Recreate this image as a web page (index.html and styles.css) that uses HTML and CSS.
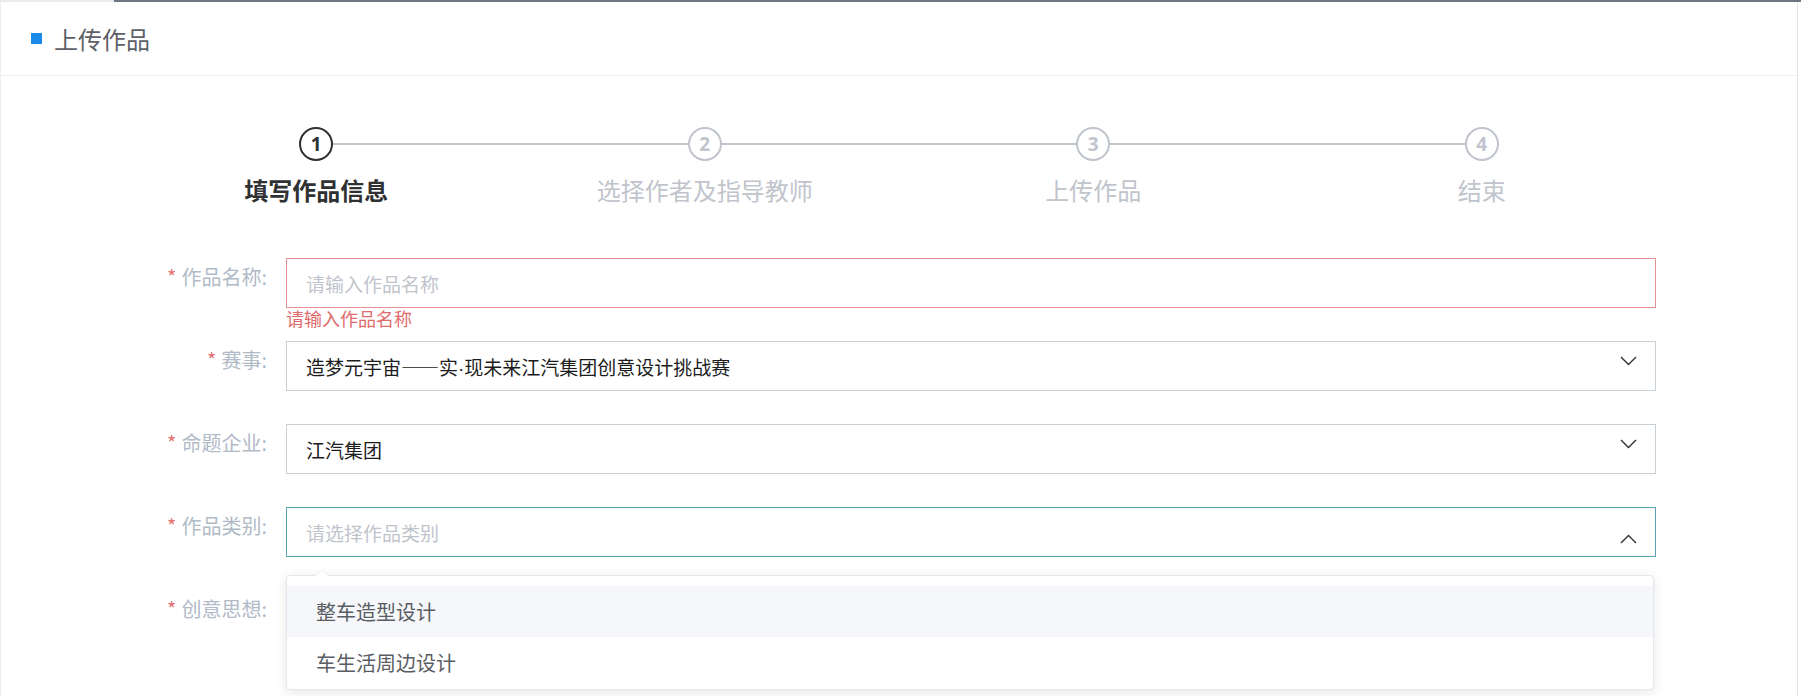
FILE: index.html
```html
<!DOCTYPE html>
<html lang="zh-CN">
<head>
<meta charset="utf-8">
<title>上传作品</title>
<link rel="stylesheet" href="styles.css">
</head>
<body>
<div class="topline"><span class="topline-left"></span><span class="topline-right"></span></div>
<div class="card">
  <div class="card-header">
    <span class="mark"></span>
    <span class="card-title">上传作品</span>
  </div>
  <div class="steps">
    <div class="step active">
      <div class="step-head"><span class="step-line"></span><span class="step-icon">1</span></div>
      <div class="step-title">填写作品信息</div>
    </div>
    <div class="step">
      <div class="step-head"><span class="step-line"></span><span class="step-icon">2</span></div>
      <div class="step-title">选择作者及指导教师</div>
    </div>
    <div class="step">
      <div class="step-head"><span class="step-line"></span><span class="step-icon">3</span></div>
      <div class="step-title">上传作品</div>
    </div>
    <div class="step last">
      <div class="step-head"><span class="step-icon">4</span></div>
      <div class="step-title">结束</div>
    </div>
  </div>
  <form class="form">
    <div class="form-item">
      <label class="form-label"><span class="req">*</span>作品名称:</label>
      <div class="form-content">
        <div class="input error"><span class="placeholder">请输入作品名称</span></div>
        <div class="error-msg">请输入作品名称</div>
      </div>
    </div>
    <div class="form-item">
      <label class="form-label"><span class="req">*</span>赛事:</label>
      <div class="form-content">
        <div class="input select"><span class="value">造梦元宇宙——实<span class="dot">·</span>现未来江汽集团创意设计挑战赛</span>
          <svg class="arrow" width="17" height="10" viewBox="0 0 17 10"><path d="M1 1 L8.5 8.5 L16 1" fill="none" stroke="#303133" stroke-width="1.4"/></svg>
        </div>
      </div>
    </div>
    <div class="form-item">
      <label class="form-label"><span class="req">*</span>命题企业:</label>
      <div class="form-content">
        <div class="input select"><span class="value">江汽集团</span>
          <svg class="arrow" width="17" height="10" viewBox="0 0 17 10"><path d="M1 1 L8.5 8.5 L16 1" fill="none" stroke="#303133" stroke-width="1.4"/></svg>
        </div>
      </div>
    </div>
    <div class="form-item">
      <label class="form-label"><span class="req">*</span>作品类别:</label>
      <div class="form-content">
        <div class="input select focus"><span class="placeholder">请选择作品类别</span>
          <svg class="arrow up" width="17" height="10" viewBox="0 0 17 10"><path d="M1 9 L8.5 1.5 L16 9" fill="none" stroke="#303133" stroke-width="1.4"/></svg>
        </div>
        <div class="dropdown">
          <span class="dropdown-arrow"></span>
          <ul class="options">
            <li class="option hover">整车造型设计</li>
            <li class="option">车生活周边设计</li>
          </ul>
        </div>
      </div>
    </div>
    <div class="form-item">
      <label class="form-label"><span class="req">*</span>创意思想:</label>
      <div class="form-content"></div>
    </div>
  </form>
</div>
</body>
</html>
```
FILE: styles.css
```css
html, body {
  margin: 0;
  padding: 0;
  overflow: hidden;
  background: #ffffff;
}
body {
  font-family: "Noto Sans CJK SC", "Noto Sans", "Liberation Sans", sans-serif;
  color: #303133;
}
.topline {
  display: flex;
  height: 2px;
}
.topline-left {
  width: 114px;
  background: #e9ebee;
}
.topline-right {
  flex: 1;
  background: #6e7682;
}
.card {
  width: 1796px;
  border-left: 1px solid #eeeeee;
  border-right: 1px solid #e6e6e6;
  height: 720px;
}
.card-header {
  height: 73px;
  border-bottom: 1px solid #f0f0f0;
  display: flex;
  align-items: center;
  padding-left: 30px;
}
.mark {
  width: 11px;
  height: 11px;
  background: #1a8be8;
  margin-right: 12px;
}
.card-title {
  font-size: 24px;
  color: #5e6168;
  line-height: 1;
}
.steps {
  display: flex;
  margin: 51px 121px 0 121px;
}
.step {
  flex: 1;
  display: flex;
  flex-direction: column;
  align-items: center;
}
.step-head {
  position: relative;
  width: 100%;
  height: 34px;
  display: flex;
  justify-content: center;
}
.step-line {
  position: absolute;
  left: 50%;
  right: -50%;
  top: 16px;
  height: 2px;
  background: #c0c4cc;
}
.step-icon {
  position: relative;
  z-index: 1;
  box-sizing: border-box;
  width: 34px;
  height: 34px;
  border: 2.5px solid #c0c4cc;
  border-radius: 50%;
  background: #fff;
  color: #c0c4cc;
  font-family: "Open Sans", "Liberation Sans", sans-serif;
  font-weight: 700;
  font-size: 19px;
  display: flex;
  align-items: center;
  justify-content: center;
}
.step-title {
  margin-top: 12px;
  font-size: 24px;
  line-height: 34px;
  color: #c0c4cc;
}
.step.active .step-icon {
  border-color: #303133;
  color: #303133;
}
.step.active .step-title {
  color: #303133;
  font-weight: 700;
}
.form {
  margin: 51px 0 0 121px;
  width: 1534px;
}
.form-item {
  display: flex;
  margin-bottom: 33px;
}
.form-label {
  box-sizing: border-box;
  width: 164px;
  padding-right: 19px;
  text-align: right;
  font-size: 20px;
  line-height: 38px;
  color: #b1bac7;
}
.req {
  color: #e37373;
  margin-right: 5px;
}
.form-content {
  flex: 1;
  position: relative;
  min-height: 50px;
}
.input {
  box-sizing: border-box;
  height: 50px;
  border: 1px solid #c9cfd6;
  padding: 0 18px 0 19px;
  display: flex;
  align-items: center;
  font-size: 19px;
}
.input.error {
  border-color: #e39292;
}
.input.focus {
  border-color: #5aa3b3;
}
.placeholder {
  color: #c0c4cc;
  flex: 1;
}
.value {
  color: #1c1c1c;
  flex: 1;
}
.dot {
  font-family: "Liberation Sans", sans-serif;
}
.arrow {
  align-self: flex-start;
  margin-top: 14px;
}
.arrow.up {
  margin-top: 26px;
}
.error-msg {
  position: absolute;
  top: 100%;
  left: 0;
  font-size: 18px;
  line-height: 20px;
  color: #e06b6b;
}
.dropdown {
  position: absolute;
  top: 68px;
  left: 0;
  right: 2px;
  z-index: 5;
  background: #fff;
  border: 1px solid #e4e7ed;
  border-radius: 4px;
  box-shadow: 0 2px 12px rgba(0, 0, 0, 0.1);
}
.dropdown-arrow {
  position: absolute;
  top: -7px;
  left: 28px;
  width: 0;
  height: 0;
  border-left: 7px solid transparent;
  border-right: 7px solid transparent;
  border-bottom: 7px solid #ebeef5;
}
.dropdown-arrow::after {
  content: "";
  position: absolute;
  top: 1px;
  left: -6px;
  border-left: 6px solid transparent;
  border-right: 6px solid transparent;
  border-bottom: 6px solid #fff;
}
.options {
  list-style: none;
  margin: 0;
  padding: 10px 0 1px 0;
}
.option {
  height: 51px;
  line-height: 51px;
  padding-left: 29px;
  font-size: 20px;
  color: #5a5d63;
}
.option.hover {
  background: #f5f7fa;
}
```
